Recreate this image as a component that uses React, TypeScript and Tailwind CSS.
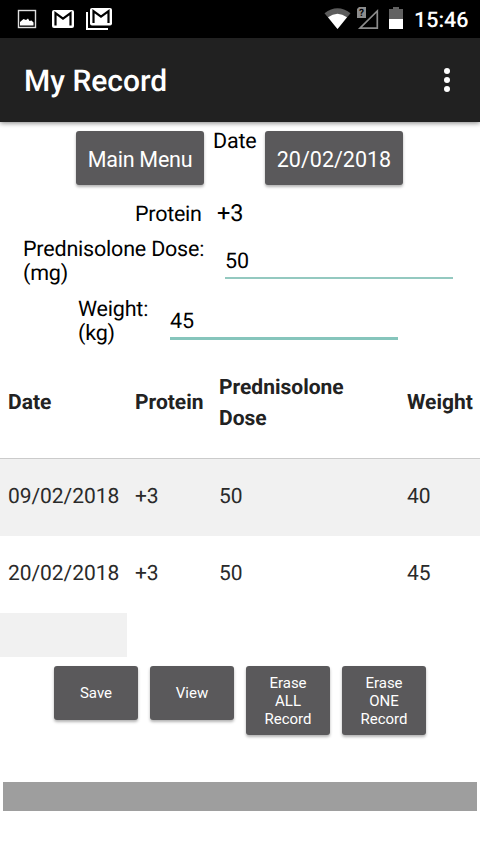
const records = [
  { date: "09/02/2018", protein: "+3", dose: "50", weight: "40" },
  { date: "20/02/2018", protein: "+3", dose: "50", weight: "45" },
]

const StatusBar = () => {
  return (
    <div className="flex h-[38px] w-full bg-black">
      <svg width="410" height="38" viewBox="0 0 410 38" className="shrink-0">
        {/* picture */}
        <rect x="18.5" y="10.5" width="17" height="17" fill="none" stroke="#e0e0e0" strokeWidth="1.4" />
        <path d="M20 25.500v-3.500l3.500-3 2.500 1 2-1.500 1.500 2.500 2-.5 2 2v3z" fill="#fff" />
        {/* mail */}
        <rect x="52" y="10" width="22" height="18" rx="2" fill="#fff" />
        <path d="M55.500 25.500V13.200l7.500 5.500 7.500-5.500v12.300" fill="none" stroke="#000" strokeWidth="2.200" />
        {/* stacked mail */}
        <path d="M87 12v17h21" fill="none" stroke="#fff" strokeWidth="2" />
        <rect x="90" y="8" width="22" height="17.500" rx="2" fill="#fff" />
        <path d="M93.500 23V11.200l7.500 5.500 7.500-5.500V23" fill="none" stroke="#000" strokeWidth="2.200" />
        {/* wifi */}
        <path d="M324.500 13.200Q337.500 3.500 350.500 13.200L337.500 29z" fill="#5c5c5c" />
        <path d="M328 17.300Q337.500 10.300 347 17.300L337.500 29z" fill="#fff" />
        {/* no signal */}
        <path d="M360 28.200L377.300 11V28.200z" fill="none" stroke="#8c8c8c" strokeWidth="1.700" />
        <path d="M359 7h7v11h-9V9z" fill="#8c8c8c" />
        <text x="361.400" y="16.300" textAnchor="middle" fontFamily="Roboto, sans-serif" fontSize="10" fontWeight="700" fill="#000">?</text>
        {/* battery */}
        <path d="M389 9h4V7h6v2h4v11h-14z" fill="#616161" />
        <path d="M389 19h14v10h-14z" fill="#fff" />
      </svg>
      <div className="mt-[6px] ml-1 text-[21.500px] leading-[29px] font-medium text-white">15:46</div>
    </div>
  )
}

const AppBar = () => {
  return (
    <div className="relative flex h-[84px] items-center justify-between bg-[#212121] pr-[30px] pl-6 shadow-[0_1px_5px_rgba(0,0,0,0.5)]">
      <h1 className="pt-0.5 text-[30px] font-medium text-white">My Record</h1>
      <div className="flex flex-col gap-[3px]">
        <span className="h-1.5 w-1.5 rounded-full bg-white" />
        <span className="h-1.5 w-1.5 rounded-full bg-white" />
        <span className="h-1.5 w-1.5 rounded-full bg-white" />
      </div>
    </div>
  )
}

const button = "flex items-center justify-center rounded-[3px] bg-[#5a595b] text-white shadow-[0_2px_3px_rgba(0,0,0,0.3)]"

const App = () => {
  return (
    <div className="h-[854px] w-[480px] overflow-hidden bg-white font-['Roboto',sans-serif] text-black [text-rendering:geometricPrecision]">
      <StatusBar />
      <AppBar />

      <div className="mt-[9px] flex h-[54px] pl-[76px] text-[21.500px]">
        <button className={`${button} w-32 pt-1 tracking-[-0.25px]`}>Main Menu</button>
        <span className="ml-[9px] w-[52px] leading-[22px] tracking-[-0.2px]">Date</span>
        <button className={`${button} w-[138px] pt-1`}>20/02/2018</button>
      </div>

      <div className="mt-[15px] flex h-7 items-center pl-[135px] text-[21.500px]">
        <span className="w-[82px] pt-0.5 tracking-[-0.25px]">Protein</span>
        <span className="text-[23.500px] tracking-[-0.2px]">+3</span>
      </div>

      <div className="mt-[10px] flex h-[60px] pl-[23px] text-[21.500px] leading-6 tracking-[-0.2px]">
        <label className="w-[202px]">Prednisolone Dose:<br />(mg)</label>
        <div className="mt-3 h-[29px] w-[228px] border-b-2 border-[#94c9c0]">50</div>
      </div>

      <div className="flex h-[67px] pl-[78px] text-[21.500px] leading-6 tracking-[-0.2px]">
        <label className="w-[92px]">Weight:<br />(kg)</label>
        <div className="mt-3 h-[30px] w-[228px] border-b-3 border-[#86c5bc]">45</div>
      </div>

      <div className="mt-[-20px] flex h-[114px] items-center border-b border-[#cbcbcb] pt-1 text-[21px] leading-[31px] font-bold text-[#222]">
        <div className="w-[127px] pl-2">Date</div>
        <div className="w-[84px] pl-2">Protein</div>
        <div className="w-[188px] pl-2">Prednisolone<br />Dose</div>
        <div className="pl-2">Weight</div>
      </div>
      {records.map((record, i) => (
        <div key={record.date} className={`flex h-[77px] text-[21px] leading-[76px] tracking-[-0.05px] text-[#2a2a2a] ${i % 2 === 0 ? "bg-[#f1f1f1]" : ""}`}>
          <div className="w-[127px] pl-2">{record.date}</div>
          <div className="w-[84px] pl-2">{record.protein}</div>
          <div className="w-[188px] pl-2">{record.dose}</div>
          <div className="pl-2">{record.weight}</div>
        </div>
      ))}
      <div className="h-11 w-[127px] bg-[#f1f1f1]" />

      <div className="mt-[9px] flex h-[69px] items-start justify-center gap-3 text-[15px] leading-[18px]">
        <button className={`${button} h-[54px] w-[84px]`}>Save</button>
        <button className={`${button} h-[54px] w-[84px]`}>View</button>
        <button className={`${button} h-[69px] w-[84px]`}>Erase<br />ALL<br />Record</button>
        <button className={`${button} h-[69px] w-[84px]`}>Erase<br />ONE<br />Record</button>
      </div>

      <div className="mx-[3px] mt-[47px] h-[29px] bg-[#9e9e9e]" />
    </div>
  )
}

export default App
